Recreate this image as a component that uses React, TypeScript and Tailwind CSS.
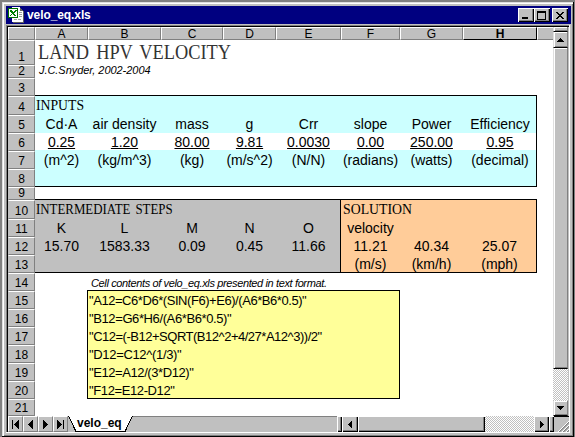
import { useLayoutEffect, useRef, useState } from "react";
import type { ReactNode } from "react";

type FitProps = { w: number; children: string; className?: string; stretch?: boolean };

// Sets a line of text to an exact width, by tracking or by horizontal scaling.
function Fit({ w, children, className = "", stretch = false }: FitProps) {
  const ref = useRef<HTMLSpanElement>(null);
  const [natural, setNatural] = useState(0);
  useLayoutEffect(() => {
    if (ref.current) setNatural(ref.current.offsetWidth);
  }, []);
  const style = !natural
    ? undefined
    : stretch
      ? { transform: `scaleX(${w / natural})` }
      : { letterSpacing: `${(w - natural) / children.length}px` };
  return (
    <span className="block text-left" style={{ width: w }}>
      <span ref={ref} className={`inline-block origin-left whitespace-nowrap ${className}`} style={style}>
        {children}
      </span>
    </span>
  );
}

const COLS = "grid grid-cols-[53px_73px_62px_53px_65px_59px_63px_74px]";
const RAISED = "bg-[#c0c0c0] shadow-[inset_1px_1px_0_#fff,inset_-1px_-1px_0_#000,inset_-2px_-2px_0_#808080]";
const TRACK = "bg-[#c0c0c0] border-l border-b border-r border-l-[#dfdfdf] border-b-black border-r-[#808080] shadow-[inset_1px_1px_0_#fff,inset_0_-1px_0_#808080]";
const DITHER = "bg-[repeating-conic-gradient(#c0c0c0_0_25%,#fff_0_50%)] bg-[length:2px_2px]";

const ROW_HEIGHTS = [25, 13, 18, 19, 18, 18, 18, 18, 13, 19, 18, 18, 18, 18, 18, 18, 18, 18, 18, 18, 17];

function Cells({ items, className = "" }: { items: string[]; className?: string }) {
  return (
    <div className={`${COLS} h-[18px] text-center text-[14px] leading-[18px] ${className}`}>
      {items.map((t, i) => (
        <span key={i} className="whitespace-nowrap">{t}</span>
      ))}
    </div>
  );
}

function Btn({ children, className = "", face = RAISED }: { children?: ReactNode; className?: string; face?: string }) {
  return <div className={`flex shrink-0 items-center justify-center ${face} ${className}`}>{children}</div>;
}

function Shape({ w, h, d }: { w: number; h: number; d: string }) {
  return (
    <svg width={w} height={h} viewBox={`0 0 ${w} ${h}`} shapeRendering="crispEdges">
      <path d={d} />
    </svg>
  );
}

function BookIcon() {
  return (
    <svg width="16" height="16" viewBox="0 0 16 16" shapeRendering="crispEdges">
      <path d="M4 0h8v1h1v1h1v1h1v12H4z" fill="#fff" />
      <path d="M12 1h1v1h1v1h1v1h-3zM15 4h1v12H5v-1h10z" fill="#606060" />
      <path d="M11 5h3v1h-3zM11 7h3v1h-3zM11 9h3v1h-3zM6 12h3v1H6zM10 12h3v1h-3z" fill="#a0a0a0" />
      <path d="M0 1h10v10H0z" fill="#007000" />
      <path d="M1 2h8v8H1z" fill="#fff" />
      <path d="M2 3h2v1h1v1h1V4h1V3h2v1H8v1H7v1H6v1h1v1h1v1H6V8H5V7H4v1H3v1H2V8h1V7h1V6H3V5H2z" fill="#008000" />
    </svg>
  );
}

function TitleBar() {
  return (
    <div className="flex h-[18px] items-center bg-[#000080] pl-[2px] pr-[3px]">
      <BookIcon />
      <div className="ml-[3px] flex-1 text-[12px] font-bold leading-[18px] text-white">
        <Fit w={64}>velo_eq.xls</Fit>
      </div>
      <Btn className="h-[14px] w-4"><Shape w={8} h={8} d="M0 6h6v2H0z" /></Btn>
      <Btn className="h-[14px] w-4"><Shape w={10} h={9} d="M0 0h9v9H0zM1 2v6h7V2z" /></Btn>
      <Btn className="ml-[2px] h-[14px] w-4">
        <Shape w={8} h={7} d="M0 0h2v1h1v1h2V1h1V0h2v1H7v1H6v1H5v1h1v1h1v1h1v1H6V6H5V5H3v1H2v1H0V6h1V5h1V4h1V3H2V2H1V1H0z" />
      </Btn>
    </div>
  );
}

function ColumnHeads() {
  return (
    <div className="flex h-[13px] bg-[#c0c0c0] text-[12px] leading-[13px]">
      <div className="w-[27px] shrink-0 border-b border-l border-r border-t border-b-[#808080] border-l-white border-r-[#808080] border-t-white" />
      <div className={COLS}>
        {"ABCDEFGH".split("").map((c) => (
          <div
            key={c}
            className={`h-[13px] border border-l-white border-t-white text-center leading-[12px] ${
              c === "H" ? "border-b-black border-r-black font-bold" : "border-b-[#808080] border-r-[#808080]"
            }`}
          >
            {c}
          </div>
        ))}
      </div>
      <div className="flex-1 border-b border-l border-t border-b-[#808080] border-l-white border-t-white" />
    </div>
  );
}

function RowHeads() {
  return (
    <div className="w-[27px] shrink-0 bg-[#c0c0c0] text-[12px]">
      {ROW_HEIGHTS.map((h, i) => (
        <div
          key={i}
          className="flex items-end justify-center overflow-hidden border border-b-[#808080] border-l-[#c0c0c0] border-r-[#808080] border-t-white"
          style={{ height: h }}
        >
          <span className={h === 13 ? "leading-[11px]" : "leading-[14px]"}>{i + 1}</span>
        </div>
      ))}
    </div>
  );
}

const SERIF = "font-['Liberation_Serif',serif]";

const FORMULAS: [string, number][] = [
  ['"A12=C6*D6*(SIN(F6)+E6)/(A6*B6*0.5)"', 217],
  ['"B12=G6*H6/(A6*B6*0.5)"', 142],
  ['"C12=(-B12+SQRT(B12^2+4/27*A12^3))/2"', 233],
  ['"D12=C12^(1/3)"', 92],
  ['"E12=A12/(3*D12)"', 105],
  ['"F12=E12-D12"', 86],
];

function Sheet() {
  return (
    <div className="w-[518px] shrink-0 overflow-hidden bg-white">
      <div className={`h-[25px] pl-[3px] text-[21px] leading-[25px] text-[#333] [word-spacing:3px] ${SERIF}`}>
        <Fit w={193} stretch>LAND HPV VELOCITY</Fit>
      </div>
      <div className="h-[13px] pl-[4px] text-[11px] italic leading-[11px]">
        <Fit w={112}>J.C.Snyder, 2002-2004</Fit>
      </div>
      <div className="h-[18px] w-[502px] border-b border-black" />

      <div className="h-[91px] w-[502px] border-b border-r border-black bg-[#ccffff]">
        <div className={`h-[19px] pl-[1px] text-[14px] leading-[19px] ${SERIF}`}>
          <Fit w={48} stretch>INPUTS</Fit>
        </div>
        <Cells items={["Cd·A", "air density", "mass", "g", "Crr", "slope", "Power", "Efficiency"]} />
        <div className="h-[17px] bg-white">
          <Cells className="underline underline-offset-1" items={["0.25", "1.20", "80.00", "9.81", "0.0030", "0.00", "250.00", "0.95"]} />
        </div>
        <Cells className="mt-px" items={["(m^2)", "(kg/m^3)", "(kg)", "(m/s^2)", "(N/N)", "(radians)", "(watts)", "(decimal)"]} />
      </div>

      <div className="h-[13px] w-[502px] border-b border-black" />

      <div className="flex h-[73px] w-[502px] border-b border-r border-black">
        <div className="w-[306px] border-r border-black bg-[#c0c0c0]">
          <div className={`h-[19px] pl-[1px] text-[14px] leading-[19px] [word-spacing:2px] ${SERIF}`}>
            <Fit w={137} stretch>INTERMEDIATE STEPS</Fit>
          </div>
          <Cells items={["K", "L", "M", "N", "O"]} />
          <Cells items={["15.70", "1583.33", "0.09", "0.45", "11.66"]} />
        </div>
        <div className="flex-1 bg-[#ffcc99]">
          <div className={`h-[19px] pl-[2px] text-[14px] leading-[19px] ${SERIF}`}>
            <Fit w={69} stretch>SOLUTION</Fit>
          </div>
          <div className="grid grid-cols-[59px_63px_73px] text-center text-[14px] leading-[18px]">
            {["velocity", "", "", "11.21", "40.34", "25.07", "(m/s)", "(km/h)", "(mph)"].map((t, i) => (
              <span key={i} className="h-[18px]">{t}</span>
            ))}
          </div>
        </div>
      </div>

      <div className="h-[17px] pl-[56px] text-[11px] italic leading-[20px]">
        <Fit w={236}>Cell contents of velo_eq.xls presented in text format.</Fit>
      </div>
      <div className="ml-[52px] h-[109px] w-[313px] border border-black bg-[#ffff99] pl-[1px] text-[13px] leading-[18px]">
        {FORMULAS.map(([t, w]) => (
          <div key={t} className="h-[18px] pt-px"><Fit w={w}>{t}</Fit></div>
        ))}
      </div>
    </div>
  );
}

function VerticalScroll() {
  return (
    <div className="flex w-[15px] shrink-0 flex-col">
      <Btn face={TRACK} className="h-[5px] w-full" />
      <Btn face={TRACK} className="h-4 w-full"><Shape w={7} h={4} d="M3 0h1v1h1v1h1v1h1v1H0V3h1V2h1V1h1z" /></Btn>
      <Btn face={TRACK} className="h-[321px] w-full" />
      <div className={`flex-1 ${DITHER}`} />
      <Btn face={TRACK} className="h-[15px] w-full"><Shape w={7} h={4} d="M0 0h7v1H6v1H5v1H4v1H3V3H2V2H1V1H0z" /></Btn>
    </div>
  );
}

const LEFT_ARROW = "M3 0h1v7H3V6H2V5H1V4H0V3h1V2h1V1h1z";
const RIGHT_ARROW = "M0 0h1v1h1v1h1v1h1v1H3v1H2v1H1v1H0z";

function BottomBar() {
  const nav = [
    <Shape key="first" w={7} h={9} d="M0 0h1v9H0zM6 0h1v9H6V8H5V7H4V6H3V5H2V4h1V3h1V2h1V1h1z" />,
    <Shape key="prev" w={5} h={9} d="M4 0h1v9H4V8H3V7H2V6H1V5H0V4h1V3h1V2h1V1h1z" />,
    <Shape key="next" w={5} h={9} d="M0 0h1v1h1v1h1v1h1v1h1v1H4v1H3v1H2v1H1v1H0z" />,
    <Shape key="last" w={7} h={9} d="M6 0h1v9H6zM0 0h1v1h1v1h1v1h1v1h1v1H4v1H3v1H2v1H1v1H0z" />,
  ];
  return (
    <div className="flex h-4 bg-[#c0c0c0]">
      {nav.map((icon, i) => (
        <div key={i} className="flex h-4 w-[15px] shrink-0 items-center justify-center border border-b-[#808080] border-l-white border-r-[#808080] border-t-white">
          {icon}
        </div>
      ))}
      <div className="relative h-4 w-[65px] shrink-0">
        <svg width="65" height="16" className="absolute left-0 top-0" shapeRendering="crispEdges">
          <path d="M0 0H65L57 15H8z" fill="#fff" />
          <path d="M.5 0L8 15.5H57L64.5 0" fill="none" stroke="#000" />
        </svg>
        <div className="relative pl-[9px] text-[12px] font-bold leading-[14px]"><Fit w={45}>velo_eq</Fit></div>
      </div>
      <div className="flex-1 border-t border-[#808080]" />
      <Btn className="h-4 w-[5px]" />
      <Btn className="h-4 w-4"><Shape w={4} h={7} d={LEFT_ARROW} /></Btn>
      <Btn className="h-4 w-[127px]" />
      <div className={`h-4 w-[49px] ${DITHER}`} />
      <Btn className="h-4 w-[15px]"><Shape w={4} h={7} d={RIGHT_ARROW} /></Btn>
      <Btn className="h-4 w-[5px]" />
      <div className="flex h-4 w-[15px] items-end justify-end border-t border-black">
        <svg width="11" height="11" viewBox="0 0 11 11">
          <path d="M1 11L11 1M5 11L11 5M9 11L11 9" stroke="#808080" strokeWidth="1.4" />
          <path d="M0 11L11 0M4 11L11 4M8 11L11 8" stroke="#fff" />
        </svg>
      </div>
    </div>
  );
}

export default function App() {
  return (
    <div className="h-[437px] w-[575px] overflow-hidden bg-[#808080] pl-[2px] pt-[2px] font-['Liberation_Sans',Arial,sans-serif] text-black">
      <div className="h-[435px] w-[572px] border-b border-r border-black bg-[#c0c0c0] shadow-[inset_1px_1px_0_#dfdfdf,inset_2px_2px_0_#fff,inset_-1px_-1px_0_#808080]">
        <div className="ml-[4px] w-[565px] pt-[4px]">
          <TitleBar />
          <div className="mt-px h-[408px] w-[564px] border-b border-r border-white">
            <div className="flex h-[407px] w-[563px] border-l border-t border-[#808080]">
              <div className="flex h-[406px] w-[562px] flex-col border-l border-t border-black">
                <div className="flex h-[389px]">
                  <div className="flex w-[545px] shrink-0 flex-col">
                    <ColumnHeads />
                    <div className="flex h-[376px] overflow-hidden">
                      <RowHeads />
                      <Sheet />
                    </div>
                  </div>
                  <VerticalScroll />
                </div>
                <BottomBar />
              </div>
            </div>
          </div>
        </div>
      </div>
    </div>
  );
}
